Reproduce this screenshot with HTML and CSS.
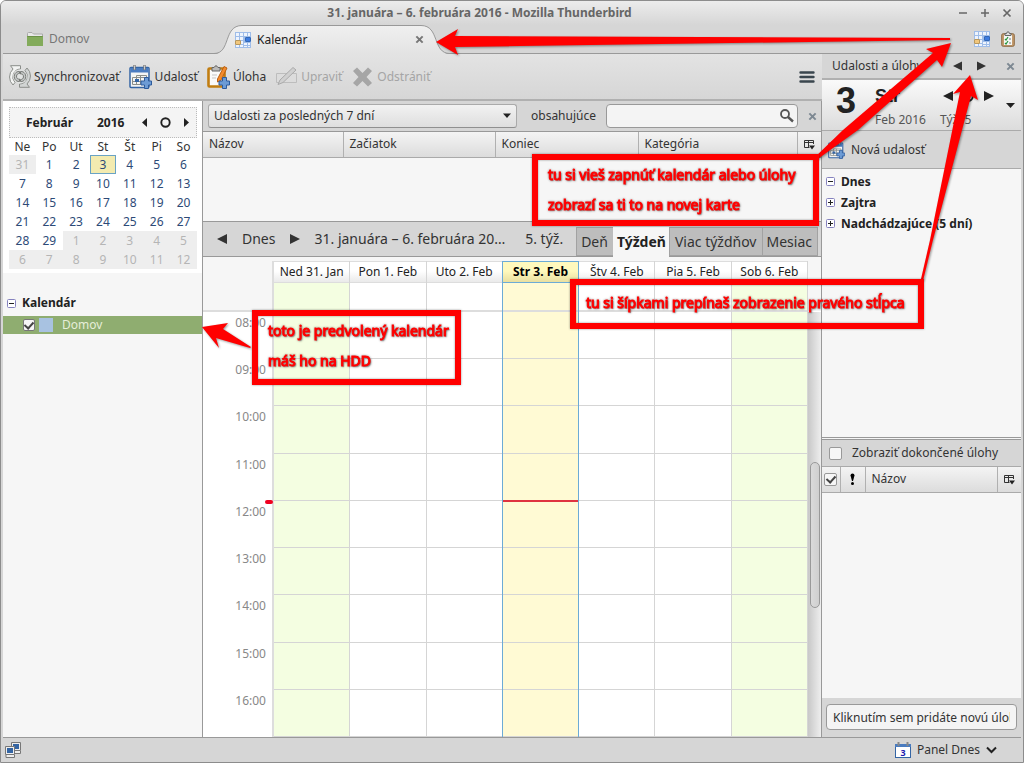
FILE: index.html
```html
<!DOCTYPE html>
<html lang="sk">
<head>
<meta charset="utf-8">
<title>31. januára – 6. februára 2016 - Mozilla Thunderbird</title>
<link rel="stylesheet" href="styles.css">
</head>
<body>
<svg class="defs" width="0" height="0" aria-hidden="true">
  <symbol id="left" viewBox="0 0 10 10"><path d="M0 5L10 0V10Z" fill="currentColor"/></symbol>
  <symbol id="right" viewBox="0 0 10 10"><path d="M10 5L0 0V10Z" fill="currentColor"/></symbol>
  <symbol id="down" viewBox="0 0 10 6"><path d="M0 0.500H10L5 6Z" fill="currentColor"/></symbol>
  <symbol id="close" viewBox="0 0 10 10"><path d="M1.500 1.500L8.500 8.500M8.500 1.500L1.500 8.500" stroke="currentColor" stroke-width="2.200"/></symbol>
  <symbol id="cal" viewBox="0 0 16 16"><path d="M0 0H16V16H0Z" fill="#9fbde9"/><path d="M1 1h3v3H1zM5 1h3v3H5zM9 1h3v3H9zM13 1h2v3h-2zM1 5h3v3H1zM5 5h3v3H5zM1 9h3v3H1zM5 9h3v3H5zM9 11h3v2H9zM13 11h2v2h-2zM1 13h3v2H1zM5 13h3v2H5zM9 14h3v1H9zM13 14h2v1h-2z" fill="#eef4fd"/><rect x="0.500" y="8.500" width="5" height="4" rx="0.500" fill="#f1c77c" stroke="#b9985d"/><rect x="10.500" y="5.500" width="5" height="4" rx="0.500" fill="#3c7be0" stroke="#3268b7"/></symbol>
  <symbol id="event" viewBox="0 0 23 24"><rect x="1" y="2.500" width="19" height="20" rx="1" fill="#f4f5f4" stroke="#3465a4" stroke-width="1.500"/><path d="M1.500 3h18v4.500h-18z" fill="#4a7cc0"/><path d="M5.500 0v5M15.500 0v5" stroke="#777" stroke-width="2.400"/><path d="M5.500 0.500v4M15.500 0.500v4" stroke="#ccc"/><path d="M3.500 12.500h12v7h-12zM7.500 10.500h10v6h-14M7.500 10.500v9M11.500 10.500v9" fill="none" stroke="#8b8e89"/><rect x="6" y="14" width="4" height="3" fill="#3465a4"/><path d="M15.500 12.500h4v3.500H22.500v4h-3v3.500h-4V20H12v-4h3.500z" fill="#6c9bd5" stroke="#2d5b9c"/></symbol>
  <symbol id="picker" viewBox="0 0 11 11"><path d="M0.500 1.500H9.500V5M0.500 1.500V8.500H5.500M0.500 3.500H9.500M4.500 1.500V8.500" fill="none" stroke="#333"/><path d="M5 6.500h6L8 10.500z" fill="#222"/></symbol>
  <symbol id="minus" viewBox="0 0 9 9"><rect x="0.500" y="0.500" width="8" height="8" rx="1" fill="#fff" stroke="#8582be"/><path d="M2 4.500H7" stroke="#222"/></symbol>
  <symbol id="plus" viewBox="0 0 9 9"><rect x="0.500" y="0.500" width="8" height="8" rx="1" fill="#fff" stroke="#8582be"/><path d="M2 4.500H7M4.500 2V7" stroke="#222"/></symbol>
</svg>

<div class="window">
  <header class="titlebar">
    <h1>31. januára – 6. februára 2016 - Mozilla Thunderbird</h1>
    <div class="wm">
      <button aria-label="Minimalizovať"><svg width="10" height="10"><path d="M1 5H9" stroke="currentColor" stroke-width="1.500"/></svg></button>
      <button aria-label="Maximalizovať"><svg width="10" height="10"><path d="M1 5H9M5 1V9" stroke="currentColor" stroke-width="1.500"/></svg></button>
      <button aria-label="Zavrieť"><svg width="10" height="10"><path d="M1.500 1.500L8.500 8.500M8.500 1.500L1.500 8.500" stroke="currentColor" stroke-width="1.700"/></svg></button>
    </div>
  </header>

  <nav class="tabs">
    <button class="tab home"><svg width="16" height="14"><path d="M0.500 13V1.500Q0.500 0.500 1.500 0.500H5L6.500 2H15.500V13Z" fill="#e8e8e8" stroke="#aaa"/><path d="M0 4H16V14H0Z" fill="#83ab5b"/><path d="M0.500 4.500H15.500" stroke="#6b9147"/></svg>Domov</button>
    <div class="tab active">
      <svg class="tab-shape" width="236" height="29" viewBox="0 0 236 29"><defs><linearGradient id="tg" x2="0" y2="1"><stop stop-color="#f0f0f0"/><stop offset="1" stop-color="#e3e3e3"/></linearGradient></defs><path d="M0 29C17 29 9 0.500 28 0.500H207C226 0.500 218 29 236 29Z" fill="url(#tg)"/><path d="M0 28.500C17 28.500 9 0.500 28 0.500H207C226 0.500 218 28.500 236 28.500" fill="none" stroke="#999"/></svg>
      <button class="tab-name"><svg width="16" height="16"><use href="#cal"/></svg>Kalendár</button>
      <button class="tab-close" aria-label="Zavrieť kartu"><svg width="9" height="9"><use href="#close"/></svg></button>
    </div>
    <div class="tab-tools">
      <button aria-label="Kalendár"><svg width="16" height="16"><use href="#cal"/></svg></button>
      <button aria-label="Úlohy"><svg width="14" height="16"><rect x="0.700" y="2.700" width="12.600" height="12.600" rx="1.500" fill="#c49a6c" stroke="#8d6c46"/><path d="M3 4h8v10H3z" fill="#f5f7f5"/><path d="M4 4.500V2.500H5.500Q7 -1.500 8.500 2.500H10V4.500Z" fill="#ddd" stroke="#666"/><path d="M4 8l1 1 2-3M4 12l1 1 2-3" fill="none" stroke="#27963d" stroke-width="1.200"/><path d="M8 8h2M8 12h2" stroke="#777"/></svg></button>
    </div>
  </nav>

  <div class="body">
    <div class="left">
      <div class="toolbar">
        <button><svg width="22" height="23"><path d="M1.500 0.700H11.500V4A8 8 0 0 0 6 17.500L4 20A11 11 0 0 1 4 4Z" fill="#f3f4f3" stroke="#8b8e8a"/><path d="M20.500 22.300H10.500V19A8 8 0 0 0 16 5.500L18 3A11 11 0 0 1 18 19Z" fill="#d2d5d4" stroke="#8b8e8a"/><path d="M11 4.500a7 7 0 0 1 0 14a7 7 0 0 1 0-14z" fill="#e1e3e2"/><path d="M10.500 16.500V14C6.500 15 6.500 8 10.500 8.500V6.500C3.500 6 3.500 17 10.500 16.500ZM11.500 6.500V9C15.500 8 15.500 15 11.500 14.500V16.500C18.500 17 18.500 6 11.500 6.500Z" fill="#c5c8c7" stroke="#777a76"/></svg>Synchronizovať</button>
        <button><svg width="23" height="24"><use href="#event"/></svg>Udalosť</button>
        <button><svg width="23" height="24"><rect x="1.500" y="3.500" width="16" height="18" rx="1" fill="#fafafa" stroke="#c17d11" stroke-width="2.600"/><path d="M5 6V2.500H7Q9 -1 11 2.500H13V6Z" fill="#bbb" stroke="#666"/><path d="M10.500 14L17 1.500l3 1.500L13.500 16l-3 1z" fill="#f58b2b" stroke="#b96014"/><path d="M5 10h5M5 13h4" stroke="#c5c5c5"/><path d="M15.500 12.500h4v3.500H22.500v4h-3v3.500h-4V20H12v-4h3.500z" fill="#6c9bd5" stroke="#2d5b9c"/></svg>Úloha</button>
        <button disabled><svg width="23" height="24"><path d="M1.500 8.500H21.500V17.500H1.500Z" fill="#dcdcdc" stroke="#bdbdbd"/><path d="M3 19.500l2-4.500L18 2.500l3 2.500L8 17.500z" fill="#d0d0d0" stroke="#aaa"/></svg>Upraviť</button>
        <button disabled><svg width="23" height="24"><path d="M2 6L6 2.500L11.500 8L17 2.500L21 6L15.500 12L21 18L17 21.500L11.500 16L6 21.500L2 18L7.500 12Z" fill="#a6a6a6"/></svg>Odstrániť</button>
        <button class="menu" aria-label="Ponuka"><svg width="16" height="14"><path d="M1.500 2.500H14.500M1.500 7H14.500M1.500 11.500H14.500" stroke="#3a464e" stroke-width="2.400" stroke-linecap="round"/></svg></button>
      </div>

      <div class="content">
        <aside class="sidebar">
          <div class="mini">
            <div class="mini-head"><b class="month">Február</b><b class="year">2016</b>
              <button aria-label="Predchádzajúci mesiac"><svg width="5" height="9" viewBox="0 0 10 10" preserveAspectRatio="none"><path d="M0 5L10 0V10Z" fill="currentColor"/></svg></button>
              <button aria-label="Dnešný deň"><svg width="11" height="11"><circle cx="5.500" cy="5.500" r="4.200" fill="none" stroke="currentColor" stroke-width="1.900"/></svg></button>
              <button aria-label="Nasledujúci mesiac"><svg width="5" height="9" viewBox="0 0 10 10" preserveAspectRatio="none"><path d="M10 5L0 0V10Z" fill="currentColor"/></svg></button>
            </div>
            <table class="days">
              <thead><tr><th>Ne</th><th>Po</th><th>Ut</th><th>St</th><th>Št</th><th>Pi</th><th>So</th></tr></thead>
              <tbody>
              <tr><td class="out">31</td><td>1</td><td>2</td><td class="today">3</td><td>4</td><td>5</td><td>6</td></tr>
              <tr><td>7</td><td>8</td><td>9</td><td>10</td><td>11</td><td>12</td><td>13</td></tr>
              <tr><td>14</td><td>15</td><td>16</td><td>17</td><td>18</td><td>19</td><td>20</td></tr>
              <tr><td>21</td><td>22</td><td>23</td><td>24</td><td>25</td><td>26</td><td>27</td></tr>
              <tr><td>28</td><td>29</td><td class="out">1</td><td class="out">2</td><td class="out">3</td><td class="out">4</td><td class="out">5</td></tr>
              <tr><td class="out">6</td><td class="out">7</td><td class="out">8</td><td class="out">9</td><td class="out">10</td><td class="out">11</td><td class="out">12</td></tr>
              </tbody>
            </table>
          </div>
          <button class="group"><svg width="9" height="9"><use href="#minus"/></svg>Kalendár</button>
          <label class="calendar"><input type="checkbox" checked><span class="swatch"></span>Domov</label>
        </aside>

        <main class="center">
          <div class="filter">
            <div class="select"><select aria-label="Filter udalostí"><option>Udalosti za posledných 7 dní</option></select><svg width="8" height="5"><use href="#down"/></svg></div>
            <label for="q">obsahujúce</label>
            <div class="search"><input id="q" type="text"><svg width="16" height="16"><circle cx="6" cy="6" r="4" fill="none" stroke="#555" stroke-width="1.800"/><path d="M9 9L14 13.500" stroke="#555" stroke-width="2.400"/></svg></div>
            <button aria-label="Zavrieť hľadanie"><svg width="9" height="9"><use href="#close"/></svg></button>
          </div>
          <div class="results">
            <table class="list"><colgroup><col class="c1"><col class="c2"><col class="c3"><col><col class="c5"></colgroup>
              <thead><tr><th>Názov</th><th>Začiatok</th><th>Koniec</th><th>Kategória</th><th class="pick"><button aria-label="Stĺpce"><svg width="11" height="11"><use href="#picker"/></svg></button></th></tr></thead></table>
          </div>
          <div class="viewbar">
            <button aria-label="Predchádzajúci týždeň"><svg width="10" height="10"><use href="#left"/></svg></button>
            <button>Dnes</button>
            <button aria-label="Nasledujúci týždeň"><svg width="10" height="10"><use href="#right"/></svg></button>
            <span class="range">31. januára – 6. februára 2016</span>
            <span class="weekno">5. týž.</span>
            <div class="views"><button>Deň</button><button class="on">Týždeň</button><button class="wide">Viac týždňov</button><button>Mesiac</button></div>
          </div>
          <div class="week">
            <div class="times">
              <div class="corner"></div>
              <div class="hour">08:00</div><div class="hour">09:00</div><div class="hour">10:00</div><div class="hour">11:00</div><div class="hour now">12:00</div><div class="hour">13:00</div><div class="hour">14:00</div><div class="hour">15:00</div><div class="hour">16:00</div>
            </div>
            <div class="day off"><div class="dh">Ned 31. Jan</div><div class="all"></div><i></i><i></i><i></i><i></i><i></i><i></i><i></i><i></i><i></i></div>
            <div class="day"><div class="dh">Pon 1. Feb</div><div class="all"></div><i></i><i></i><i></i><i></i><i></i><i></i><i></i><i></i><i></i></div>
            <div class="day"><div class="dh">Uto 2. Feb</div><div class="all"></div><i></i><i></i><i></i><i></i><i></i><i></i><i></i><i></i><i></i></div>
            <div class="day cur"><div class="dh">Str 3. Feb</div><div class="all"></div><i></i><i></i><i></i><i></i><i class="now"></i><i></i><i></i><i></i><i></i></div>
            <div class="day"><div class="dh">Štv 4. Feb</div><div class="all"></div><i></i><i></i><i></i><i></i><i></i><i></i><i></i><i></i><i></i></div>
            <div class="day"><div class="dh">Pia 5. Feb</div><div class="all"></div><i></i><i></i><i></i><i></i><i></i><i></i><i></i><i></i><i></i></div>
            <div class="day off"><div class="dh">Sob 6. Feb</div><div class="all"></div><i></i><i></i><i></i><i></i><i></i><i></i><i></i><i></i><i></i></div>
            <div class="scroll"><div class="track"><div class="thumb"></div></div></div>
          </div>
        </main>
      </div>
    </div>

    <aside class="panel">
      <div class="panel-head"><span>Udalosti a úlohy</span>
        <button aria-label="Predchádzajúce zobrazenie"><svg width="9" height="10"><use href="#left"/></svg></button>
        <button aria-label="Nasledujúce zobrazenie"><svg width="9" height="10"><use href="#right"/></svg></button>
        <button class="x" aria-label="Zavrieť panel"><svg width="9" height="9"><use href="#close"/></svg></button></div>
      <div class="date"><div class="num">3</div>
        <div class="date-info">
          <div class="date-row"><b>Str</b><button aria-label="Predchádzajúci deň"><svg width="10" height="10"><use href="#left"/></svg></button><button aria-label="Dnes"><svg width="11" height="11"><circle cx="5.500" cy="5.500" r="4.200" fill="none" stroke="currentColor" stroke-width="1.900"/></svg></button><button aria-label="Nasledujúci deň"><svg width="10" height="10"><use href="#right"/></svg></button></div>
          <div class="date-sub"><span>Feb 2016</span><span>Týž. 5</span></div>
        </div>
        <button class="more" aria-label="Zobraziť mesiac"><svg width="9" height="5"><path d="M0 0H9L4.500 5Z" fill="currentColor"/></svg></button>
      </div>
      <div class="new"><button><svg width="17" height="18"><use href="#event"/></svg>Nová udalosť</button></div>
      <div class="agenda">
        <button><svg width="9" height="9"><use href="#minus"/></svg>Dnes</button>
        <button><svg width="9" height="9"><use href="#plus"/></svg>Zajtra</button>
        <button><svg width="9" height="9"><use href="#plus"/></svg>Nadchádzajúce (5 dní)</button>
      </div>
      <label class="done"><input type="checkbox">Zobraziť dokončené úlohy</label>
      <div class="tasks">
        <table class="list"><colgroup><col class="t1"><col class="t2"><col><col class="t4"></colgroup>
          <thead><tr><th class="pick"><input type="checkbox" checked aria-label="Dokončené"></th><th class="pick"><svg width="5" height="12"><path d="M0.500 2.500Q0.500 0.500 2.500 0.500T4.500 2.500L3 8H2Z"/><circle cx="2.500" cy="10.500" r="1.500"/></svg></th><th>Názov</th><th class="pick"><button aria-label="Stĺpce"><svg width="11" height="11"><use href="#picker"/></svg></button></th></tr></thead></table>
      </div>
      <div class="add"><input type="text" aria-label="Nová úloha" value="Kliknutím sem pridáte novú úlohu"></div>
    </aside>
  </div>

  <footer class="status">
    <button aria-label="Stav pripojenia"><svg width="16" height="16"><path d="M6.500 0.500H15.500V8.500H6.500ZM7 9V11.500H15.500V9" fill="#eee" stroke="#777"/><path d="M8 2H14V7H8Z" fill="#3465a4"/><path d="M0.500 4.500H9.500V12.500H0.500ZM1 13V15.500H9.500V13" fill="#eee" stroke="#777"/><path d="M2 6H8V11H2Z" fill="#3465a4"/></svg></button>
    <button class="today-btn"><svg width="16" height="16"><rect x="0.500" y="2.500" width="15" height="13" fill="#fff" stroke="#3465a4"/><path d="M0 2H16V5H0Z" fill="#4a7cc0"/><path d="M3.500 0V4M12.500 0V4" stroke="#888" stroke-width="2"/><text x="8" y="14" class="daynum">3</text></svg>Panel Dnes<svg width="11" height="8"><path d="M1 1.500L5.500 6L10 1.500" fill="none" stroke="#222" stroke-width="2"/></svg></button>
  </footer>

  <svg class="arrows" width="1024" height="763" aria-hidden="true">
    <path d="M436 42L458 29L455 36L950 38V40L455 47L458 55Z"/>
    <path d="M951 43L942 67L937 60L858 130L815 161L813 159L843 130L933 53L926 49Z"/>
    <path d="M970 75L978 100L971 96L933 240L923 281L921 279L930 240L960 92L953 94Z"/>
    <path d="M202 327L228 323L223 329L251 347L250 348L216 338L219 348Z"/>
  </svg>
  <div class="note n1">tu si vieš zapnúť kalendár alebo úlohy<br>zobrazí sa ti to na novej karte</div>
  <div class="note n2">tu si šípkami prepínaš zobrazenie pravého stĺpca</div>
  <div class="note n3">toto je predvolený kalendár<br>máš ho na HDD</div>
</div>
</body>
</html>
```

FILE: styles.css
```css
* { box-sizing: border-box; }
body { margin: 0; background: #fff; font: 12px/16px "Noto Sans", "Open Sans", sans-serif; color: #333; }
button { border: 0; padding: 0; margin: 0; background: none; font: inherit; color: inherit; display: flex; align-items: center; justify-content: center; white-space: nowrap; }
input, select { font: inherit; color: inherit; margin: 0; }
svg { display: block; flex: none; }
.defs { position: absolute; }
table { border-collapse: collapse; table-layout: fixed; width: 100%; }

input[type="checkbox"] { appearance: none; flex: none; width: 13px; height: 13px; border: 1px solid #999; border-radius: 2px; background: #f6f6f6; display: grid; place-items: center; }
input[type="checkbox"]:checked::after { content: ""; width: 4px; height: 7px; margin-bottom: 2px; border: solid #444; border-width: 0 2px 2px 0; transform: rotate(42deg); }

.window { position: relative; height: 100vh; display: flex; flex-direction: column; border: 1px solid #8c8c8c; border-radius: 6px 6px 0 0; padding: 0 2px; background: #d6d6d6; overflow: hidden; }
.titlebar { height: 24px; flex: none; display: flex; align-items: center; margin: 0 -2px; background: linear-gradient(#ececec, #d6d6d6); color: #666; }
.titlebar h1 { flex: 1; margin: 0; text-align: center; font-size: 12px; line-height: 24px; font-weight: 700; }
.wm { display: flex; gap: 12px; padding-right: 11px; }

.tabs { height: 29px; flex: none; display: flex; border-bottom: 1px solid #999; }
.tab { display: flex; align-items: center; }
.home { gap: 6px; padding-left: 24px; width: 211px; justify-content: flex-start; color: #777; }
.active { position: relative; width: 236px; height: 29px; padding: 0 26px 0 21px; justify-content: space-between; }
.tab-shape { position: absolute; left: 0; top: 0; }
.tab-name, .tab-close { position: relative; }
.tab-name { gap: 6px; color: #222; }
.tab-close { color: #777; }
.tab-tools { margin-left: auto; display: flex; gap: 11px; padding-right: 6px; }

.body { flex: 1; min-height: 0; display: flex; }
.left { flex: 1; min-width: 0; display: flex; flex-direction: column; }
.toolbar { height: 47px; flex: none; display: flex; align-items: center; gap: 9px; padding: 0 7px 0 6px; background: linear-gradient(#e3e3e3, #d6d6d6); border-bottom: 2px solid #b0b0b0; }
.toolbar button { gap: 3px; }
.toolbar button:disabled { color: #a5a5a5; }
.toolbar .menu { margin-left: auto; }
.content { flex: 1; min-height: 0; display: flex; }

.sidebar { width: 200px; flex: none; background: #f6f6f6; border-right: 1px solid #999; }
.mini { margin-bottom: 20px; padding: 6px 5px 4px 6px; background: #fff; }
.mini-head { display: flex; align-items: center; height: 31px; padding-right: 7px; border: 1px dotted #bbb; background: #f4f4f4; color: #222; }
.mini-head button { margin-right: 13px; }
.mini-head button:last-child { margin-right: 0; }
.month { width: 79px; text-align: center; }
.year { flex: 1; padding-left: 8px; }
.days th, .days td { padding: 0; height: 19px; text-align: center; font-weight: 400; line-height: 16px; }
.days th { height: 17px; color: #333; }
.days td { color: #2d4a77; }
.days .out { background: #eee; color: #b5b5b5; }
.days .today { background: #f3ebb0; box-shadow: inset 0 0 0 1px #6aa3c4; }
.group { gap: 6px; padding-left: 4px; height: 20px; margin-bottom: 3px; font-weight: 700; color: #222; }
.calendar { display: flex; align-items: center; height: 18px; padding-left: 20px; background: #8fad70; color: #e6eed9; }
.calendar input { border-color: #777; width: 12px; height: 12px; }
.swatch { width: 14px; height: 14px; margin: 0 9px 0 4px; background: #a8c2e1; }

.center { flex: 1; min-width: 0; display: flex; flex-direction: column; border-right: 1px solid #999; }
.filter { height: 31px; flex: none; display: flex; align-items: center; padding: 0 4px 0 5px; border-bottom: 1px solid #999; }
.select { position: relative; width: 309px; flex: none; margin-right: 14px; }
.select select { appearance: none; width: 100%; height: 24px; padding: 0 5px; border: 1px solid #aaa; border-bottom-color: #8f8f8f; border-radius: 3px; background: linear-gradient(#f2f2f2, #dedede); }
.select svg { position: absolute; right: 6px; top: 9px; color: #222; pointer-events: none; }
.search { position: relative; flex: 1; margin: 0 10px; }
.search input { width: 100%; height: 24px; border: 1px solid #999; border-radius: 4px; background: #f4f4f4; }
.search svg { position: absolute; right: 3px; top: 4px; }
.filter > button, .x { color: #7d8892; }
.results { height: 90px; flex: none; background: #f6f6f6; border-bottom: 1px solid #999; }
.list tr { height: 25px; background: linear-gradient(#f4f4f4, #dcdcdc); }
.list th { padding: 0 0 0 6px; height: 25px; text-align: left; font-weight: 400; border-bottom: 1px solid #aaa; }
.list th + th { border-left: 1px solid #b0b0b0; }
.list .pick { padding: 0; }
.list .pick > * { margin: 0 auto; }
.c1 { width: 140px; } .c2 { width: 152px; } .c3 { width: 143px; } .c5 { width: 24px; }
.t1 { width: 18px; } .t2 { width: 25px; } .t4 { width: 24px; }

.viewbar { height: 35px; flex: none; display: flex; align-items: center; padding: 0 3px 0 14px; border-bottom: 1px solid #999; font-size: 14px; line-height: 20px; }
.viewbar > button + button { margin-left: 15px; }
.range { flex: 1; min-width: 0; margin-left: 14px; overflow: hidden; white-space: nowrap; text-overflow: ellipsis; }
.weekno { margin: 0 13px 0 16px; }
.views { align-self: flex-end; display: flex; height: 29px; }
.views button { padding: 0 5px 0 4px; background: #bdbdbd; border: solid #a2a2a2; border-width: 1px 0 1px 1px; }
.views .on { padding: 0 3px; background: #f6f6f6; height: 30px; border-color: #f6f6f6; font-weight: 700; color: #222; }
.views .wide { padding: 0 5px; }
.views button:last-child { border-right-width: 1px; }

.week { flex: 1; min-height: 0; display: flex; padding-top: 4px; background: linear-gradient(#f6f6f6 54px, #fff 54px); }
.times { width: 71px; flex: none; display: flex; flex-direction: column; border-right: 2px solid #ddd; color: #888; text-align: right; }
.corner { height: 51px; flex: none; border-bottom: 2px solid #ddd; }
.hour { position: relative; flex: 1; padding: 3px 6px 0 0; }
.hour.now::before { content: ""; position: absolute; right: -1px; top: -1px; width: 8px; height: 4px; border-radius: 2px; background: #f00020; }
.day { flex: 1; min-width: 0; display: flex; flex-direction: column; background: #fff; border-right: 1px solid #d5d5d5; }
.dh { height: 22px; flex: none; border: solid #ddd; border-width: 1px 0; background: linear-gradient(#fff 45%, #eaeaea); text-align: center; line-height: 20px; color: #222; white-space: nowrap; }
.all { height: 29px; flex: none; border-bottom: 2px solid #ddd; }
.day i { flex: 1; border-bottom: 1px solid #d5d5d5; }
.off { background: #f4fee1; }
.cur { background: #fffad4; border-right-color: #6cabd6; box-shadow: -1px 0 #6cabd6; }
.cur .dh { background: linear-gradient(#fff9bd 45%, #e9dfa0); border-color: #6cabd6; font-weight: 700; color: #000; }
.cur .now { box-shadow: inset 0 1px #df3340, 0 -1px #df3340; }
.scroll { width: 13px; flex: none; padding-top: 51px; }
.track { height: 100%; padding: 150px 1px 0 2px; background: linear-gradient(90deg, #c8c8c8, #eee); }
.thumb { height: 146px; border: 1px solid #999; border-radius: 5px; background: linear-gradient(90deg, #dadada, #cfcfcf); }

.panel { width: 199px; flex: none; display: flex; flex-direction: column; }
.panel-head { height: 26px; flex: none; display: flex; align-items: center; padding: 0 6px 0 10px; border-bottom: 2px solid #b0b0b0; color: #333; }
.panel-head span { width: 98px; margin-right: 23px; white-space: nowrap; }
.panel-head button + button { margin-left: 15px; }
.panel-head .x { margin-left: auto !important; }
.date { height: 51px; flex: none; display: flex; padding: 0 6px 0 14px; border-bottom: 1px solid #aaa; background: linear-gradient(#fafafa, #dcdcdc); color: #222; }
.num { width: 39px; font: 700 36px/42px "Liberation Sans", sans-serif; }
.date-info { flex: 1; padding-top: 4px; }
.date-row { display: flex; align-items: center; gap: 10px; height: 24px; }
.date-row b { width: 58px; font: 700 18px/24px "Liberation Sans", sans-serif; }
.date-sub { display: flex; gap: 14px; padding-top: 4px; color: #555; }
.new { height: 38px; flex: none; display: flex; border-bottom: 1px solid #aaa; padding-left: 6px; }
.new button { gap: 6px; }
.agenda { flex: 1; background: #f6f6f6; border-bottom: 3px double #999; padding: 2px 0 0 4px; }
.agenda button { gap: 6px; height: 21px; font-weight: 700; color: #222; }
.done { height: 27px; flex: none; display: flex; align-items: center; gap: 10px; padding-left: 7px; border-bottom: 1px solid #aaa; }
.tasks { height: 231px; flex: none; background: #f6f6f6; }
.add { height: 39px; flex: none; padding: 6px 4px; }
.add input { width: 100%; height: 26px; padding: 0 6px; border: 1px solid #999; border-radius: 4px; background: #f4f4f4; }

.status { height: 25px; flex: none; display: flex; align-items: center; justify-content: space-between; padding: 0 24px 0 2px; border-top: 1px solid #999; }
.today-btn { gap: 6px; }
.daynum { font: 700 9px "Noto Sans", sans-serif; fill: #1d1db0; text-anchor: middle; }

.arrows { position: absolute; left: -1px; top: -1px; fill: #f00; filter: drop-shadow(1px 1px 1px rgba(0, 0, 0, 0.4)); pointer-events: none; }
.note { position: absolute; border: 6px solid #f00; padding: 0 10px; font-size: 14px; line-height: 30px; color: #f00; white-space: nowrap; -webkit-text-stroke: 1px #f00; text-shadow: 1px 1px 1px #888; filter: drop-shadow(0 0 1px rgba(0, 0, 0, 0.4)); }
.n1 { left: 531px; top: 153px; width: 287px; height: 72px; }
.n2 { left: 569px; top: 278px; width: 354px; height: 50px; padding-top: 3px; }
.n3 { left: 251px; top: 309px; width: 209px; height: 75px; }
```
